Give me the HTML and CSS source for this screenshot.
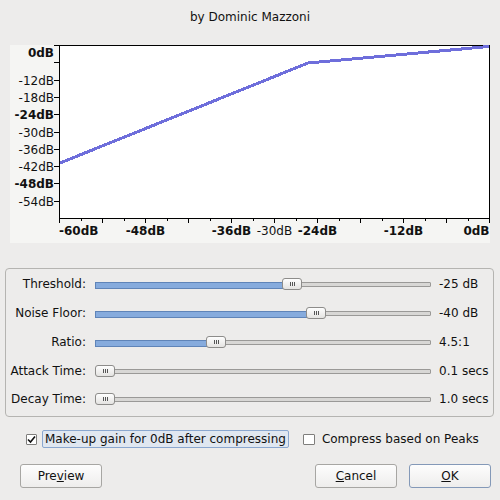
FILE: index.html
```html
<!DOCTYPE html>
<html>
	<head>
		<meta http-equiv="content-type" content="text/html; charset=utf-8">
		<title>Compressor</title>
		<link rel="stylesheet" href="styles.css">
	</head>
	<body>
		<div class="dialog">
			<div class="title">by Dominic Mazzoni</div>

			<!-- response curve -->
			<div class="graph">
				<svg width="480" height="198" viewBox="0 0 480 198">
					<rect x="49.5" y="0.5" width="430" height="173" fill="#ffffff" stroke="#000000"/>
					<g stroke="#000000" shape-rendering="crispEdges">
						<line x1="44" y1="0.5" x2="49" y2="0.5"/>
						<line x1="44" y1="17.5" x2="49" y2="17.5"/>
						<line x1="44" y1="35.5" x2="49" y2="35.5"/>
						<line x1="44" y1="52.5" x2="49" y2="52.5"/>
						<line x1="44" y1="69.5" x2="49" y2="69.5"/>
						<line x1="44" y1="87.5" x2="49" y2="87.5"/>
						<line x1="44" y1="104.5" x2="49" y2="104.5"/>
						<line x1="44" y1="121.5" x2="49" y2="121.5"/>
						<line x1="44" y1="138.5" x2="49" y2="138.5"/>
						<line x1="44" y1="156.5" x2="49" y2="156.5"/>
					</g>
					<g id="xticks" stroke="#000000" shape-rendering="crispEdges"></g>
					<g class="axis">
						<text x="44" y="11.5" class="b">0dB</text>
						<text x="44" y="39.5">-12dB</text>
						<text x="44" y="56.5">-18dB</text>
						<text x="44" y="74" class="b">-24dB</text>
						<text x="44" y="91.5">-30dB</text>
						<text x="44" y="108.5">-36dB</text>
						<text x="44" y="126">-42dB</text>
						<text x="44" y="143" class="b">-48dB</text>
						<text x="44" y="160.5">-54dB</text>
					</g>
					<g class="xaxis">
						<text x="49" y="189.5" class="b s">-60dB</text>
						<text x="135.5" y="189.5" class="b">-48dB</text>
						<text x="221.5" y="189.5" class="b">-36dB</text>
						<text x="264.5" y="189.5">-30dB</text>
						<text x="307.5" y="189.5" class="b">-24dB</text>
						<text x="393.5" y="189.5" class="b">-12dB</text>
						<text x="479.5" y="189.5" class="b e">0dB</text>
					</g>
					<polyline points="50,118 298,18 479,1.5" fill="none" stroke="#6e6edb" stroke-width="3" shape-rendering="crispEdges"/>
				</svg>
			</div>

			<!-- sliders -->
			<div class="group">
				<div class="row">
					<span class="lbl">Threshold:</span>
					<div class="slider"><div class="track"><div class="fill" style="width:197px"></div></div><div class="thumb" style="left:187px"><i></i></div></div>
					<span class="val">-25 dB</span>
				</div>
				<div class="row">
					<span class="lbl">Noise Floor:</span>
					<div class="slider"><div class="track"><div class="fill" style="width:221px"></div></div><div class="thumb" style="left:211px"><i></i></div></div>
					<span class="val">-40 dB</span>
				</div>
				<div class="row">
					<span class="lbl">Ratio:</span>
					<div class="slider"><div class="track"><div class="fill" style="width:121px"></div></div><div class="thumb" style="left:111px"><i></i></div></div>
					<span class="val">4.5:1</span>
				</div>
				<div class="row">
					<span class="lbl">Attack Time:</span>
					<div class="slider"><div class="track"></div><div class="thumb" style="left:0px"><i></i></div></div>
					<span class="val">0.1 secs</span>
				</div>
				<div class="row">
					<span class="lbl">Decay Time:</span>
					<div class="slider"><div class="track"></div><div class="thumb" style="left:0px"><i></i></div></div>
					<span class="val">1.0 secs</span>
				</div>
			</div>

			<!-- options -->
			<div class="checks">
				<span class="box">
					<svg width="11" height="11" viewBox="0 0 11 11"><path d="M2 5.5 L4.5 8 L9 2.5" fill="none" stroke="#111111" stroke-width="1.6"/></svg>
				</span>
				<span class="focus">Make-up gain for 0dB after compressing</span>
				<span class="box second"></span>
				<span class="clabel">Compress based on Peaks</span>
			</div>

			<div class="buttons">
				<button class="btn">Pre<u>v</u>iew</button>
				<button class="btn cancel"><u>C</u>ancel</button>
				<button class="btn ok"><u>O</u>K</button>
			</div>
		</div>

		<script>
			// minor ticks every 3dB on the input axis
			var xticks = document.getElementById("xticks");
			for (var j = 0; j <= 20; j++) {
				var x = 49.5 + j * 21.5;
				var len = (j % 2 == 0) ? 4 : 2;
				var line = document.createElementNS("http://www.w3.org/2000/svg", "line");
				line.setAttribute("x1", x);
				line.setAttribute("x2", x);
				line.setAttribute("y1", 174);
				line.setAttribute("y2", 174 + len);
				xticks.appendChild(line);
			}
		</script>
	</body>
</html>
```

FILE: styles.css
```css
body {
	margin: 0px;
	padding: 0px;
	background-color: #edeceb;
	font-family: "DejaVu Sans", sans-serif;
	font-size: 12px;
	color: #111111;
}

.dialog {
	width: 500px;
	height: 500px;
	overflow: hidden;
}

.title {
	padding-top: 8px;
	line-height: 18px;
	text-align: center;
}

.graph {
	margin: 19px 10px 0 10px;
	height: 198px;
	background-color: #f5f5f3;
}

.graph svg {
	display: block;
}

.axis text,
.xaxis text {
	font-family: "DejaVu Sans", sans-serif;
	font-size: 12px;
	fill: #111111;
}

.axis text {
	text-anchor: end;
}

.xaxis text {
	text-anchor: middle;
}

.xaxis text.s {
	text-anchor: start;
}

.xaxis text.e {
	text-anchor: end;
}

.b {
	font-weight: bold;
}

.group {
	box-sizing: border-box;
	margin: 25px 6px 0 5px;
	height: 149px;
	padding-top: 1px;
	border: 1px solid #b5b4b1;
	border-radius: 4px;
}

.row {
	display: flex;
	align-items: center;
	height: 28.75px;
}

.lbl {
	width: 80px;
	text-align: right;
}

.slider {
	position: relative;
	width: 336px;
	height: 12px;
	margin-left: 9px;
}

.track {
	position: absolute;
	left: 0;
	right: 0;
	top: 4px;
	height: 5px;
	box-sizing: border-box;
	border: 1px solid #9a9997;
	border-radius: 1px;
	background-color: #d8d7d5;
}

.fill {
	position: absolute;
	left: -1px;
	top: -1px;
	height: 5px;
	border: 1px solid #5f84b8;
	border-right: none;
	background-color: #86abdd;
}

.thumb {
	position: absolute;
	top: 0;
	width: 20px;
	height: 12px;
	box-sizing: border-box;
	border: 1px solid #8d8c8a;
	border-radius: 3px;
	background: linear-gradient(#fefefe, #e4e3e1);
	display: flex;
	align-items: center;
	justify-content: center;
}

.thumb i {
	width: 5px;
	height: 4px;
	background: linear-gradient(to right, #555 1px, transparent 1px, transparent 2px, #555 2px, #555 3px, transparent 3px, transparent 4px, #555 4px);
}

.val {
	margin-left: 8px;
}

.checks {
	display: flex;
	align-items: center;
	margin-top: 13px;
	height: 18px;
	padding-left: 26px;
}

.box {
	box-sizing: border-box;
	width: 11px;
	height: 11px;
	border: 1px solid #7f7e7c;
	border-radius: 1px;
	background-color: #ffffff;
	display: flex;
}

.box svg {
	margin: -1px;
}

.focus {
	box-sizing: border-box;
	margin-left: 5px;
	height: 18px;
	line-height: 16px;
	padding: 0 2px;
	border: 1px solid #8aa7cf;
	border-radius: 2px;
	background-color: #e0e7f0;
}

.second {
	margin-left: 14px;
	width: 12px;
}

.clabel {
	margin-left: 7px;
}

.buttons {
	display: flex;
	margin-top: 16px;
	padding: 0 9px 0 20px;
}

.btn {
	width: 82px;
	height: 24px;
	font-family: "DejaVu Sans", sans-serif;
	font-size: 12px;
	color: #111111;
	border: 1px solid #a7a6a3;
	border-radius: 3px;
	background: linear-gradient(#fdfdfd, #eeedec);
	padding: 0;
}

.cancel {
	margin-left: auto;
}

.ok {
	margin-left: 12px;
	border-color: #8499b8;
}
```
